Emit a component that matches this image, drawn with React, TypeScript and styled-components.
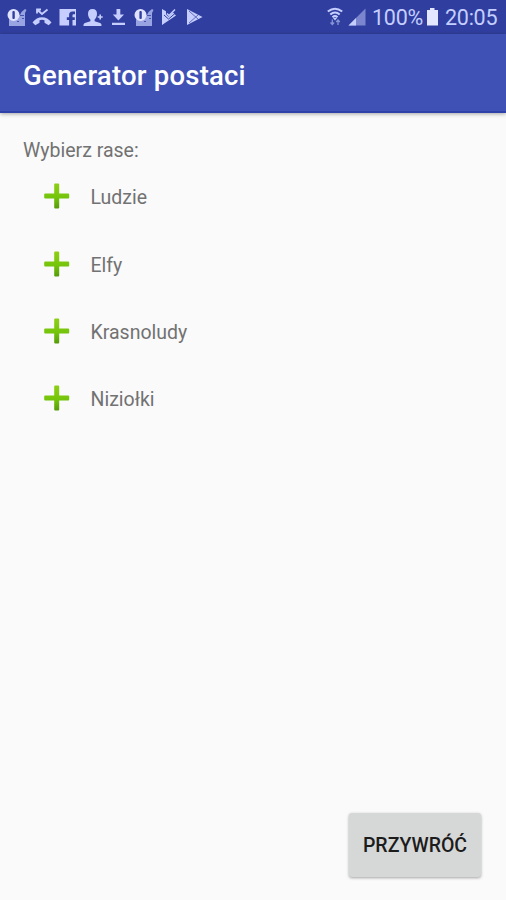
import React from "react";
import styled, { createGlobalStyle } from "styled-components";

const GlobalStyle = createGlobalStyle`
  *, *::before, *::after { box-sizing: border-box; }
  body { margin: 0; background: #fafafa; font-family: Roboto, "Liberation Sans", sans-serif; }
`;

const Screen = styled.div`
  display: flex;
  flex-direction: column;
  width: 506px;
  height: 900px;
  background: #fafafa;
  overflow: hidden;
`;

const StatusBar = styled.header`
  display: flex;
  justify-content: space-between;
  height: 34px;
  padding: 7px 8px 7px 7px;
  background: #303f9f;
  color: #c5ceff;
`;

const Notifications = styled.div`
  display: flex;
  gap: 5.4px;
`;

const SystemStatus = styled.div`
  display: flex;
  align-items: flex-start;
`;

const Glyph = styled.svg<{ $width?: number; $gap?: number }>`
  display: block;
  flex: none;
  width: ${({ $width = 20 }) => $width}px;
  height: 20px;
  margin-right: ${({ $gap = 0 }) => $gap}px;
  fill: #c5ceff;
`;

const StatusText = styled.span<{ $width: number; $gap?: number }>`
  width: ${({ $width }) => $width}px;
  margin-right: ${({ $gap = 0 }) => $gap}px;
  font-size: 21.5px;
  line-height: 22px;
  letter-spacing: -0.25px;
  white-space: nowrap;
`;

const AppBar = styled.div`
  display: flex;
  align-items: center;
  flex: none;
  height: 79px;
  padding: 0 23px;
  background: #3f51b5;
  border-bottom: 2px solid #2d43a9;
  box-shadow: 0 1px 4px rgba(0, 0, 0, 0.35);
`;

const Title = styled.h1`
  margin: 7px 0 0;
  color: #fff;
  font-size: 27.5px;
  font-weight: 500;
  line-height: 32px;
  letter-spacing: 0.22px;
`;

const Content = styled.main`
  display: flex;
  flex: 1;
  flex-direction: column;
  padding: 26px 25px 23px 23px;
`;

const Label = styled.p`
  margin: 0;
  color: #727272;
  font-size: 19.5px;
  line-height: 24px;
`;

const RaceList = styled.ul`
  display: flex;
  flex-direction: column;
  margin: -1px 0 0;
  padding: 0;
  list-style: none;
`;

const RaceRow = styled.li`
  display: flex;
  align-items: center;
  gap: 19.5px;
  height: 67.4px;
  padding-left: 20px;
`;

const RaceName = styled(Label)`
  padding-top: 5px;
`;

const PlusIcon = styled.svg`
  display: block;
  width: 28px;
  height: 28px;
  margin-top: 1px;
`;

const ResetButton = styled.button`
  align-self: flex-end;
  width: 132px;
  height: 64px;
  margin-top: auto;
  padding: 2px 0 0;
  border: 0;
  border-radius: 3px;
  background: #d6d7d7;
  box-shadow: 0 1px 3px rgba(0, 0, 0, 0.35);
  color: #1c1c1c;
  font: 500 19.5px/24px Roboto, "Liberation Sans", sans-serif;
`;

const AlertGlyph = () => (
  <Glyph viewBox="0 0 20 20">
    <path d="M2 19V13h3v-2h4V8h4l1.500-3L18 2l1.500 1L18 6v13z" opacity=".7" />
    <path d="M13 8.500h4M10 14.500h2m3-3h2" stroke="#303f9f" strokeWidth=".8" />
    <circle cx="6.5" cy="8" r="6" fill="#dfe3ff" />
    <rect x="5.4" y="4" width="2.4" height="8" rx="1" fill="#303f9f" />
  </Glyph>
);

const MissedCallGlyph = () => (
  <Glyph viewBox="0 0 20 20">
    <path d="M5 6.500V2.500h4M5 2.500l5 4.500 5.500-4.500" fill="none" stroke="#c5ceff" strokeWidth="1.8" />
    <path d="M.5 15.500C5.500 8.500 14.500 8.500 19.500 15.500l-2.800 2.800-4.200-2.500v-2.500c-2-.7-3-.7-5 0v2.500l-4.200 2.500z" />
  </Glyph>
);

const FacebookGlyph = () => (
  <Glyph viewBox="0 0 20 20">
    <path
      fillRule="evenodd"
      d="M1.500 2h16.500v16.500h-3.500v-5.500h2.300v-2.700h-2.300V8.200q0-1 1-1h1.500V4.600h-2.700c-2.100 0-3.200 1.300-3.200 3.200v2.500H8.800V13h2.300v5.500H1.500z"
    />
  </Glyph>
);

const AddContactGlyph = () => (
  <Glyph viewBox="0 0 20 20">
    <path d="M9.500 2c3 0 4.500 2 4.500 4.700 0 2.400-1 4.500-2.400 5.700v1.800l5.500 1.800c1.200.5 1.400 1.100 1.400 3H.5c0-1.900.2-2.500 1.400-3l5.500-1.800v-1.800C6 11.200 5 9.100 5 6.700 5 4 6.500 2 9.500 2z" />
    <path d="M17.200 7.500v5M14.700 10h5" stroke="#c5ceff" strokeWidth="1.600" />
  </Glyph>
);

const DownloadGlyph = () => (
  <Glyph viewBox="0 0 20 20">
    <path d="M7.500 2h3.800v5.500h3.700L9.400 13.500 3.800 7.500h3.700zM3 15.800h13V18H3z" />
  </Glyph>
);

const PlayCheckGlyph = () => (
  <Glyph viewBox="0 0 20 20">
    <path d="M3 2l4 2.200v3l2.500 2.500L14 5.500l3 3L3 18z" />
    <path d="M8 6.500l2 2 6-6" fill="none" stroke="#c5ceff" strokeWidth="1.500" />
    <path d="M5 8l4.500 4 6.500-5.500" fill="none" stroke="#303f9f" strokeWidth="1" />
  </Glyph>
);

const PlayGlyph = () => (
  <Glyph viewBox="0 0 20 20">
    <path d="M2 2l15.500 8L2 18z" />
    <path d="M4 4l9.500 8.500M4 16l9.500-8.500" fill="none" stroke="#303f9f" strokeWidth=".7" />
  </Glyph>
);

const WifiGlyph = () => (
  <Glyph viewBox="0 0 18 20" $width={18} $gap={3}>
    <path
      d="M.8 4.500Q8-1 15.200 4.500M3.300 7.500Q8 3.500 12.700 7.500M5.500 10.300Q8 8 10.500 10.300"
      fill="none"
      stroke="#c5ceff"
      strokeWidth="2.100"
    />
    <path d="M6 11h4l-2 2.500z" />
    <path d="M5.300 12.500v5M3.500 15.500l1.800 2 1.800-2M11 18v-5M9.200 15l1.800-2 1.800 2" fill="none" stroke="#8795d8" strokeWidth="1.300" />
  </Glyph>
);

const SignalGlyph = () => (
  <Glyph viewBox="0 0 18 20" $width={18} $gap={6}>
    <path d="M17.500 1.500V18.500H.5z" opacity=".5" />
    <path d="M8 11v7.500H.5z" />
  </Glyph>
);

const BatteryGlyph = () => (
  <Glyph viewBox="0 0 12 20" $width={12} $gap={7}>
    <path d="M4 1h4.500v2H12v15.500H1V3h3z" fill="#e3e7ff" />
  </Glyph>
);

const races = ["Ludzie", "Elfy", "Krasnoludy", "Niziołki"];

export default function App() {
  return (
    <>
      <GlobalStyle />
      <Screen>
        <StatusBar>
          <Notifications>
            <AlertGlyph />
            <MissedCallGlyph />
            <FacebookGlyph />
            <AddContactGlyph />
            <DownloadGlyph />
            <AlertGlyph />
            <PlayCheckGlyph />
            <PlayGlyph />
          </Notifications>
          <SystemStatus>
            <WifiGlyph />
            <SignalGlyph />
            <StatusText $width={50} $gap={4}>100%</StatusText>
            <BatteryGlyph />
            <StatusText $width={53}>20:05</StatusText>
          </SystemStatus>
        </StatusBar>
        <AppBar>
          <Title>Generator postaci</Title>
        </AppBar>
        <Content>
          <Label>Wybierz rase:</Label>
          <RaceList>
            {races.map((race, index) => (
              <RaceRow key={race}>
                <PlusIcon viewBox="0 0 28 28">
                  <defs>
                    <linearGradient id={`plus-${index}`} x1="0" y1="0" x2="0" y2="1">
                      <stop offset="0" stopColor="#8fce16" />
                      <stop offset=".55" stopColor="#74c50b" />
                      <stop offset="1" stopColor="#559a0a" />
                    </linearGradient>
                  </defs>
                  <path
                    d="M12.200 1.500h3q1 0 1 1v8.900h9q1 0 1 1v3.200q0 1-1 1h-9v9q0 1-1 1h-3q-1 0-1-1v-9h-9q-1 0-1-1v-3.200q0-1 1-1h9V2.500q0-1 1-1z"
                    fill={`url(#plus-${index})`}
                  />
                </PlusIcon>
                <RaceName as="span">{race}</RaceName>
              </RaceRow>
            ))}
          </RaceList>
          <ResetButton type="button">PRZYWRÓĆ</ResetButton>
        </Content>
      </Screen>
    </>
  );
}
